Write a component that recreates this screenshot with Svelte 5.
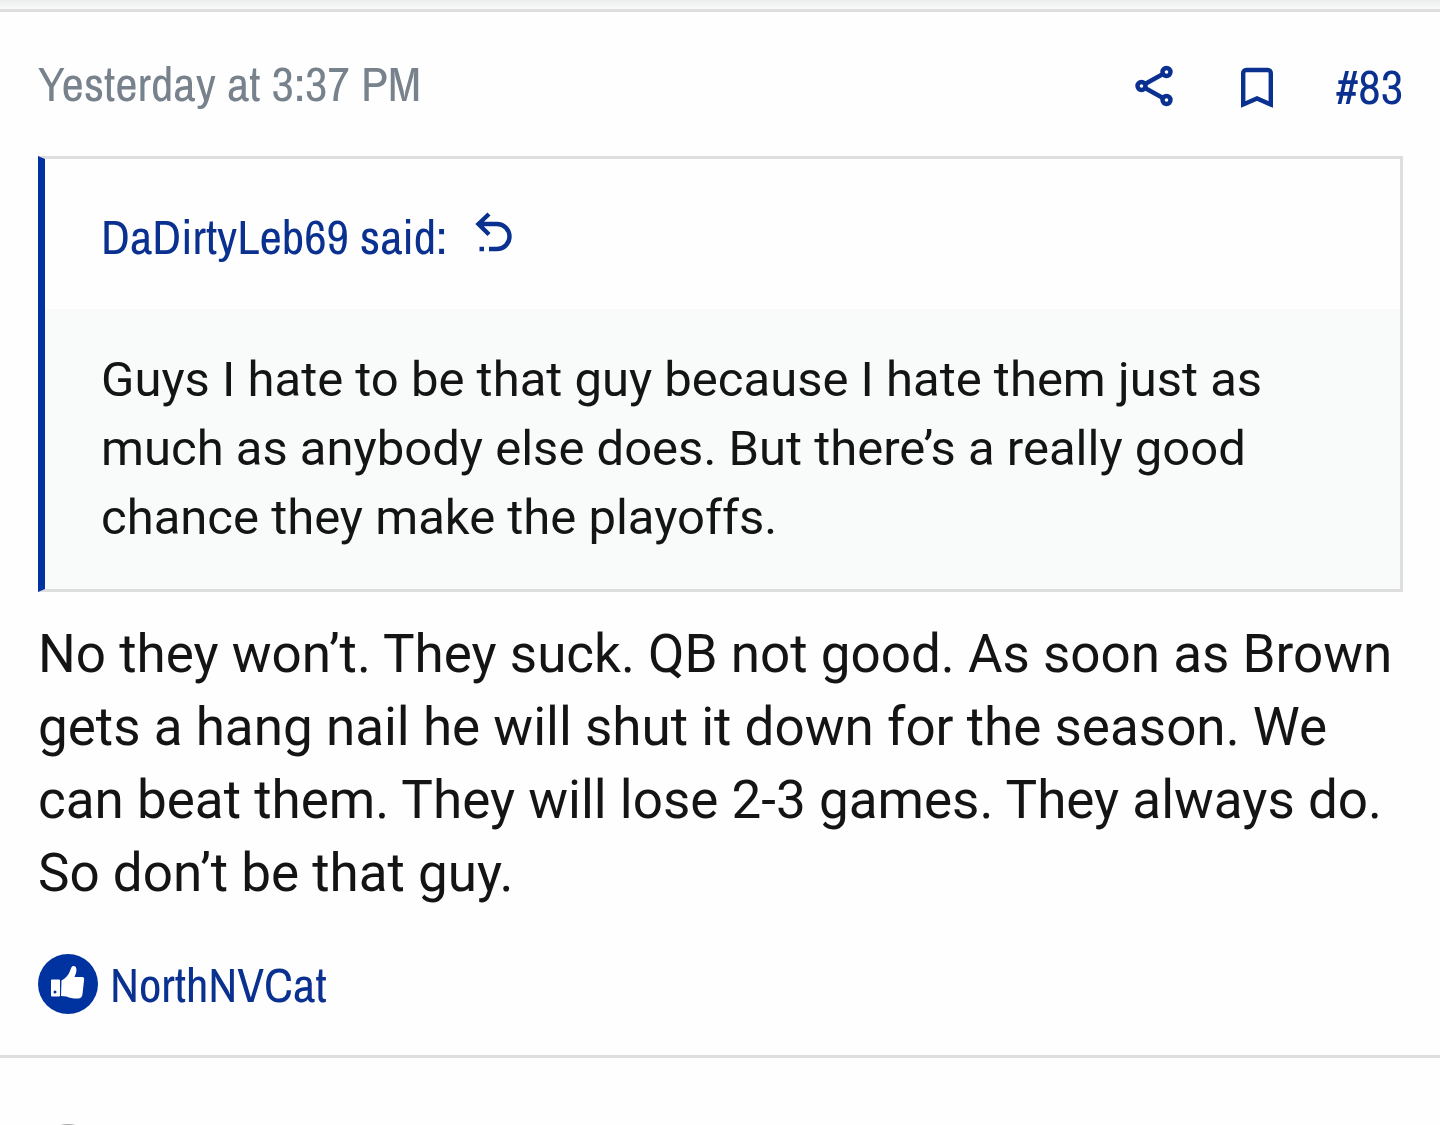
<script lang="ts">
	const post = {
		date: 'Yesterday at 3:37 PM',
		number: '#83',
		quoteAuthor: 'DaDirtyLeb69',
		quote:
			'Guys I hate to be that guy because I hate them just as much as anybody else does. But there’s a really good chance they make the playoffs.',
		body: 'No they won’t. They suck. QB not good. As soon as Brown gets a hang nail he will shut it down for the season. We can beat them. They will lose 2-3 games. They always do. So don’t be that guy.',
		likedBy: 'NorthNVCat'
	};
</script>

<main>
	<div class="strip"></div>

	<article class="post">
		<header>
			<a class="date" href="#post">{post.date}</a>
			<div class="actions">
				<button type="button" aria-label="Share">
					<svg width="44" height="42" viewBox="0 0 44 42" fill="none" stroke="currentColor" stroke-width="4.4">
						<circle cx="7.5" cy="21" r="4" />
						<circle cx="32.5" cy="7" r="4" />
						<circle cx="32.5" cy="35" r="4" />
						<path d="M11 19 29 9M11 23l18 10" />
					</svg>
				</button>
				<button type="button" aria-label="Bookmark">
					<svg width="32" height="48" viewBox="0 0 32 48" fill="none" stroke="currentColor" stroke-width="4.4">
						<path d="M2.200 42.500V11a3 3 0 0 1 3-3h21.600a3 3 0 0 1 3 3v31.500L16 36.500z" />
					</svg>
				</button>
				<a href="#post">{post.number}</a>
			</div>
		</header>

		<blockquote>
			<div class="source">
				<a href="#quoted">
					{post.quoteAuthor} said:
					<svg width="38" height="48" viewBox="0 0 38 48" fill="none" stroke="currentColor" stroke-width="4.4">
						<path d="M14 2 3.500 12 14 22.500M3.500 12H22a12.500 12.500 0 0 1 0 25H14M4.500 37h4.500" />
					</svg>
				</a>
			</div>
			<p>{post.quote}</p>
		</blockquote>

		<p class="message">{post.body}</p>

		<footer>
			<svg width="60" height="60" viewBox="0 0 60 60" aria-hidden="true">
				<circle cx="30" cy="30" r="30" fill="#0033a0" />
				<path
					fill="#fff"
					d="M14 25.500h7a1 1 0 0 1 1 1v15a1 1 0 0 1-1 1h-7a1 1 0 0 1-1-1v-15a1 1 0 0 1 1-1zM23.500 26.500c4-2 7-5.500 8.500-9.500 1-3 1.500-5 3.500-5 3 0 3.500 3.500 2.500 7l-1.500 4h7.500c2 0 2.500 1.500 2 3.500l-1.500 13.500c-.5 3-1.500 4.500-5 4.500-5 0-8-.5-11-2l-5.500-.5z"
				/>
				<circle cx="17" cy="38" r="1.500" fill="#0033a0" />
			</svg>
			<a href="#likes">{post.likedBy}</a>
		</footer>
	</article>

	<div class="next">
		<span class="avatar"></span>
	</div>
</main>

<style>
	:global(body) {
		margin: 0;
		background: #fefefe;
	}

	main {
		height: 100vh;
		overflow: hidden;
		display: flex;
		flex-direction: column;
		color: #141414;
		font-family: Roboto, sans-serif;
	}

	.strip {
		height: 9px;
		flex: none;
		background: linear-gradient(#ebeeed, #f9fafa);
		border-bottom: 3px solid #dedede;
	}

	.post {
		padding: 41px 37px 41px 38px;
		border-bottom: 3px solid #dedede;
	}

	header {
		display: flex;
		justify-content: space-between;
		align-items: flex-start;
		margin-bottom: 40px;
	}

	a,
	button {
		color: #0a3190;
		text-decoration: none;
		font-family: 'Liberation Sans Narrow', 'Archivo Narrow', Roboto, sans-serif;
		font-size: 49px;
		line-height: 60px;
	}

	.date {
		color: #78828c;
	}

	.actions {
		display: flex;
		align-items: center;
		gap: 63px;
		padding-top: 3px;
	}

	button {
		display: flex;
		padding: 0;
		border: 0;
		background: none;
		cursor: pointer;
	}

	svg {
		display: block;
		flex: none;
	}

	blockquote {
		margin: 0 0 26px;
		border: 3px solid #dedede;
		border-left: 7px solid #0033a0;
		background: #f9fafa;
	}

	.source {
		padding: 47px 56px 43px;
		background: #fefefe;
	}

	.source a {
		display: inline-flex;
		align-items: center;
		gap: 28px;
	}

	p {
		margin: 0;
	}

	blockquote p {
		padding: 36px 56px 37px;
		font-size: 49px;
		line-height: 69px;
	}

	.message {
		font-size: 53px;
		line-height: 73px;
	}

	footer {
		display: flex;
		align-items: center;
		gap: 12px;
		margin-top: 44px;
	}

	.next {
		padding: 66px 38px 0;
	}

	.avatar {
		display: block;
		width: 60px;
		height: 60px;
		border-radius: 50%;
		background: #a8a8a8;
	}
</style>
